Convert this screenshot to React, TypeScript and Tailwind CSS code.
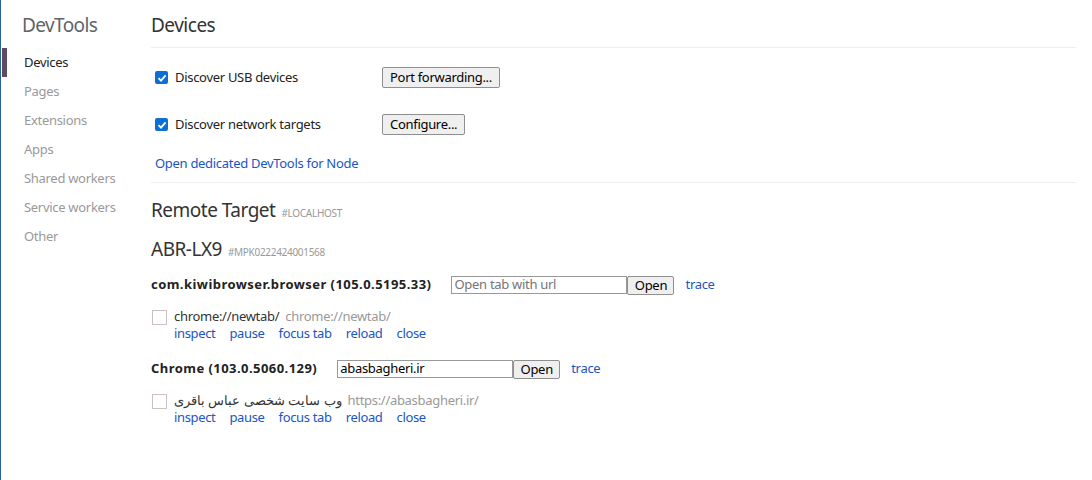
import React from "react";

type PageType = {
  title: string;
  url: string;
  rtl?: boolean;
};

type BrowserType = {
  name: string;
  inputValue: string;
  placeholder?: string;
  pages: PageType[];
};

const navItems = [
  "Devices",
  "Pages",
  "Extensions",
  "Apps",
  "Shared workers",
  "Service workers",
  "Other",
];

const browsers: BrowserType[] = [
  {
    name: "com.kiwibrowser.browser (105.0.5195.33)",
    inputValue: "",
    placeholder: "Open tab with url",
    pages: [{ title: "chrome://newtab/", url: "chrome://newtab/" }],
  },
  {
    name: "Chrome (103.0.5060.129)",
    inputValue: "abasbagheri.ir",
    pages: [
      {
        title: "وب سایت شخصی عباس باقری",
        url: "https://abasbagheri.ir/",
        rtl: true,
      },
    ],
  },
];

const Checkbox = ({ checked }: { checked: boolean }) =>
  checked ? (
    <span className="block w-[13px] h-[13px] rounded-[2px] bg-[#0b6fd4] flex items-center justify-center shrink-0">
      <svg width="10" height="10" viewBox="0 0 10 10">
        <path d="M1.5 5.2 L4 7.6 L8.6 2.4" stroke="white" strokeWidth="1.8" fill="none" />
      </svg>
    </span>
  ) : (
    <span className="block w-[15px] h-[15px] border border-[#cdbfc6] bg-white shrink-0" />
  );

const Btn = ({ label }: { label: string }) => (
  <button className="h-[21px] px-[7px] border border-[#8f8f8f] rounded-[2px] bg-[#efefef] text-[13px] tracking-[-0.3px] text-black leading-none">
    {label}
  </button>
);

const Actions = () => (
  <div className="flex gap-x-[14px] text-[13px] tracking-[-0.35px] text-[#1a55c4] pl-[23px] leading-[17px]">
    <span>inspect</span>
    <span>pause</span>
    <span>focus tab</span>
    <span>reload</span>
    <span>close</span>
  </div>
);

const App = () => {
  return (
    <div
      className="w-[1092px] h-[480px] bg-white flex border-l border-[#2a6496] overflow-hidden"
      style={{ fontFamily: '"Noto Sans", "Open Sans", sans-serif' }}
    >
      {/* sidebar */}
      <div className="w-[150px] shrink-0 pt-[12px]">
        <h1 className="pl-[21px] text-[19px] tracking-[-0.6px] text-[#5f6368] leading-[26px] font-normal">
          DevTools
        </h1>
        <ul className="mt-[10px]">
          {navItems.map((item, i) => (
            <li key={item} className="flex items-center h-[29px]">
              <span
                className={
                  i === 0
                    ? "w-[5px] h-[29px] ml-[1px] bg-[#5b4b63]"
                    : "w-[5px] h-[29px] ml-[1px]"
                }
              />
              <span
                className={
                  i === 0
                    ? "ml-[17px] text-[13px] tracking-[-0.3px] text-[#222]"
                    : "ml-[17px] text-[13px] tracking-[-0.3px] text-[#999]"
                }
              >
                {item}
              </span>
            </li>
          ))}
        </ul>
      </div>

      {/* main */}
      <div className="w-[925px] shrink-0">
        <h2 className="text-[19px] tracking-[-0.5px] leading-[26px] text-[#333] pt-[12px] pb-[9px] border-b border-[#eee] font-normal">
          Devices
        </h2>

        <div className="pl-[4px] pt-[19px] text-[13px] tracking-[-0.3px]">
          <div className="flex items-center h-[21px]">
            <Checkbox checked />
            <span className="ml-[7px] w-[207px] text-[#222]">
              Discover USB devices
            </span>
            <Btn label="Port forwarding..." />
          </div>
          <div className="flex items-center h-[21px] mt-[26px]">
            <Checkbox checked />
            <span className="ml-[7px] w-[207px] text-[#222]">
              Discover network targets
            </span>
            <Btn label="Configure..." />
          </div>
          <div className="mt-[20px] text-[#1a55c4] leading-[17px]">
            Open dedicated DevTools for Node
          </div>
        </div>

        <div className="mt-[10px] border-b border-[#eee]" />

        <div className="flex items-baseline mt-[13px] h-[26px]">
          <span className="text-[19px] tracking-[-0.5px] text-[#333]">Remote Target</span>
          <span className="ml-[6px] text-[10px] tracking-[-0.3px] text-[#999]">#LOCALHOST</span>
        </div>

        <div className="flex items-baseline mt-[13px] h-[26px]">
          <span className="text-[19px] tracking-[-0.5px] text-[#333]">ABR-LX9</span>
          <span className="ml-[6px] text-[10px] tracking-[-0.3px] text-[#999]">#MPK0222424001568</span>
        </div>

        {browsers.map((b, bi) => (
          <div key={b.name + bi} className={bi === 0 ? "mt-[14px]" : "mt-[17px]"}>
            <div className="flex items-center h-[20px]">
              <b className="text-[13px] tracking-[0.45px] text-[#222] font-bold">{b.name}</b>
              <div className="flex items-center ml-[20px]">
                <input
                  readOnly
                  value={b.inputValue}
                  placeholder={b.placeholder}
                  className="w-[176px] h-[18px] border border-[#999] px-[2px] text-[13px] tracking-[-0.3px] text-black placeholder:text-[#757575] outline-none"
                />
                <button className="h-[19px] w-[47px] border border-[#8f8f8f] rounded-[2px] bg-[#efefef] text-[13px] tracking-[-0.3px] text-black leading-none">
                  Open
                </button>
                <span className="ml-[11px] text-[13px] tracking-[-0.3px] text-[#1a55c4]">trace</span>
              </div>
            </div>
            {b.pages.map((p) => (
              <div key={p.url} className="mt-[14px]">
                <div className="flex items-center h-[16px]">
                  <span className="ml-[1px]">
                    <Checkbox checked={false} />
                  </span>
                  <span
                    dir={p.rtl ? "rtl" : "ltr"}
                    className="ml-[7px] text-[13px] tracking-[-0.3px] text-[#333]"
                  >
                    {p.title}
                  </span>
                  <span className="ml-[6px] text-[13px] tracking-[-0.3px] text-[#999]">{p.url}</span>
                </div>
                <Actions />
              </div>
            ))}
          </div>
        ))}
      </div>
    </div>
  );
};

export default App;
